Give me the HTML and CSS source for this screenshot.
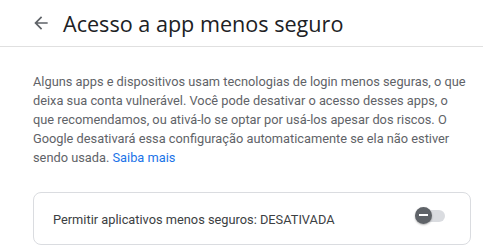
FILE: index.html
```html
<!DOCTYPE html>
<html lang="pt-BR">
<head>
  <meta charset="UTF-8">
  <meta name="viewport" content="width=device-width, initial-scale=1.0">
  <title>Acesso a app menos seguro</title>
  <link rel="stylesheet" href="styles.css">
</head>
<body>

  <!-- Cabeçalho -->
  <header class="top-bar">
    <a class="back" href="#" aria-label="Voltar">
      <svg viewBox="0 0 24 24" width="20" height="20">
        <path d="M20 11H7.83l5.59-5.59L12 4l-8 8 8 8 1.41-1.41L7.83 13H20v-2z" fill="#5f6368"/>
      </svg>
    </a>
    <h1>Acesso a app menos seguro</h1>
  </header>

  <main class="content">
    <p class="intro">
      Alguns apps e dispositivos usam tecnologias de login menos seguras, o que
      deixa sua conta vulnerável. Você pode desativar o acesso desses apps, o
      que recomendamos, ou ativá-lo se optar por usá-los apesar dos riscos. O
      Google desativará essa configuração automaticamente se ela não estiver
      sendo usada. <a href="#">Saiba mais</a>
    </p>

    <div class="card">
      <span class="card-label">Permitir aplicativos menos seguros: DESATIVADA</span>
      <button class="switch" type="button" aria-pressed="false">
        <span class="track"></span>
        <span class="knob"></span>
      </button>
    </div>
  </main>

</body>
</html>
```

FILE: styles.css
```css
/* Global */
body {
  margin: 0;
  font-family: Roboto, Arial, sans-serif;
  background: #fff;
  color: #3c4043;
}

/* Cabeçalho */
.top-bar {
  display: flex;
  align-items: center;
  height: 46px;
  padding-left: 31px;
  border-bottom: 1px solid #e0e0e0;
}

.back {
  display: flex;
  width: 20px;
  height: 20px;
  margin-right: 12px;
}

.top-bar h1 {
  margin: 0;
  font-family: "Open Sans", Roboto, sans-serif;
  font-size: 21.6px;
  font-weight: 400;
  color: #202124;
}

/* Conteúdo */
.content {
  padding: 25px 12px 0 33px;
}

.intro {
  margin: 0 0 25px;
  font-size: 12.8px;
  line-height: 19px;
  color: #5f6368;
}

.intro a {
  color: #1a73e8;
  text-decoration: none;
}

.card {
  display: flex;
  align-items: center;
  justify-content: space-between;
  height: 51px;
  padding: 0 25px 0 19px;
  border: 1px solid #dadce0;
  border-radius: 8px;
}

.card-label {
  font-size: 12.8px;
  color: #3c4043;
  padding-top: 1px;
}

/* Interruptor */
.switch {
  position: relative;
  width: 30px;
  height: 18px;
  padding: 0;
  border: none;
  background: none;
  margin-bottom: 6px;
}

.switch .track {
  position: absolute;
  left: 2px;
  right: 0;
  top: 3px;
  height: 12px;
  border-radius: 6px;
  background: #dadce0;
}

.switch .knob {
  position: absolute;
  left: 0;
  top: 0;
  width: 17px;
  height: 17px;
  border-radius: 50%;
  background: #5f6368;
  box-shadow: 0 1px 2px rgba(0, 0, 0, 0.3);
}

.switch .knob::after {
  content: "";
  position: absolute;
  left: 4px;
  right: 4px;
  top: 7.5px;
  height: 2px;
  background: #fff;
}
```
